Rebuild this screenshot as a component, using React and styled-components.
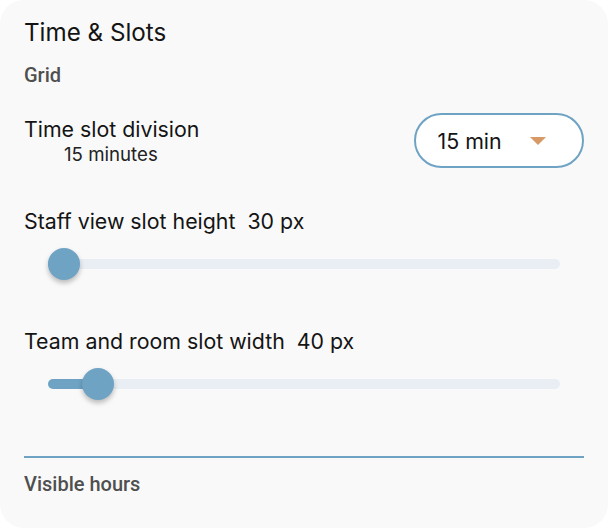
import React from 'react'
import styled, { createGlobalStyle } from 'styled-components'

const GlobalStyle = createGlobalStyle`
  html, body {
    margin: 0;
    padding: 0;
    background: #ffffff;
  }
  body {
    font-family: Inter, "Noto Sans", sans-serif;
  }
`

const Card = styled.section`
  box-sizing: border-box;
  width: 608px;
  height: 528px;
  background: #f9f9f9;
  border-radius: 24px;
  padding: 18px 24px 0;
  color: #141414;
  display: flex;
  flex-direction: column;
`

const Title = styled.h2`
  margin: 0;
  font-size: 24.2px;
  font-weight: 400;
  line-height: 30px;
`

const GroupLabel = styled.div`
  font-family: Roboto, "Liberation Sans", sans-serif;
  font-size: 20px;
  font-weight: 500;
  color: #4f4f4f;
  line-height: 24px;
  margin-top: ${p => p.$top}px;
`

const Row = styled.div`
  display: flex;
  align-items: flex-start;
  justify-content: space-between;
  margin-top: 26px;
`

const LabelBlock = styled.div`
  display: flex;
  flex-direction: column;
  padding-top: 4px;
`

const Label = styled.div`
  display: flex;
  gap: 12px;
  font-size: 21.33px;
  line-height: 24px;
`

const SubLabel = styled.div`
  font-size: 18.67px;
  line-height: 21px;
  margin-top: 3px;
  color: #222;
  padding-left: 40px;
`

const Select = styled.button`
  box-sizing: border-box;
  width: 170px;
  height: 55px;
  border: 2px solid #6fa3c4;
  border-radius: 28px;
  background: #fff;
  display: flex;
  align-items: center;
  padding: 0 0 0 21.5px;
  font-family: Inter, "Noto Sans", sans-serif;
  font-size: 21.33px;
  color: #141414;
  cursor: pointer;
`

const Caret = styled.span`
  width: 0;
  height: 0;
  margin-left: 28px;
  border-left: 8px solid transparent;
  border-right: 8px solid transparent;
  border-top: 8px solid #d79a66;
`

const SliderBlock = styled.div`
  margin-top: ${p => p.$top}px;
`

const Track = styled.div`
  position: relative;
  width: 512px;
  height: 10px;
  border-radius: 5px;
  background: #e8eef3;
  margin: 26px 0 0 24px;
`

const Fill = styled.div`
  height: 100%;
  border-radius: 5px;
  background: #6fa3c4;
`

const Thumb = styled.div`
  position: absolute;
  top: 50%;
  width: 32px;
  height: 32px;
  margin: -16px 0 0 -16px;
  border-radius: 50%;
  background: #6fa3c4;
  box-shadow: 0 3px 5px rgba(0, 0, 0, 0.25);
`

const Divider = styled.hr`
  margin: 67px 0 0;
  border: none;
  height: 2px;
  background: #6fa3c4;
`

const Slider = ({ pos }) => (
  <Track>
    <Fill style={{ width: pos }} />
    <Thumb style={{ left: pos }} />
  </Track>
)

export default function App() {
  return (
    <>
      <GlobalStyle />
      <Card>
        <Title>Time &amp; Slots</Title>
        <GroupLabel $top={15}>Grid</GroupLabel>

        <Row>
          <LabelBlock>
            <Label>Time slot division</Label>
            <SubLabel>15 minutes</SubLabel>
          </LabelBlock>
          <Select>
            15 min
            <Caret />
          </Select>
        </Row>

        <SliderBlock $top={41}>
          <Label>
            <span>Staff view slot height</span>
            <span>30 px</span>
          </Label>
          <Slider pos={16} />
        </SliderBlock>

        <SliderBlock $top={60}>
          <Label>
            <span>Team and room slot width</span>
            <span>40 px</span>
          </Label>
          <Slider pos={50} />
        </SliderBlock>

        <Divider />
        <GroupLabel $top={14}>Visible hours</GroupLabel>
      </Card>
    </>
  )
}
